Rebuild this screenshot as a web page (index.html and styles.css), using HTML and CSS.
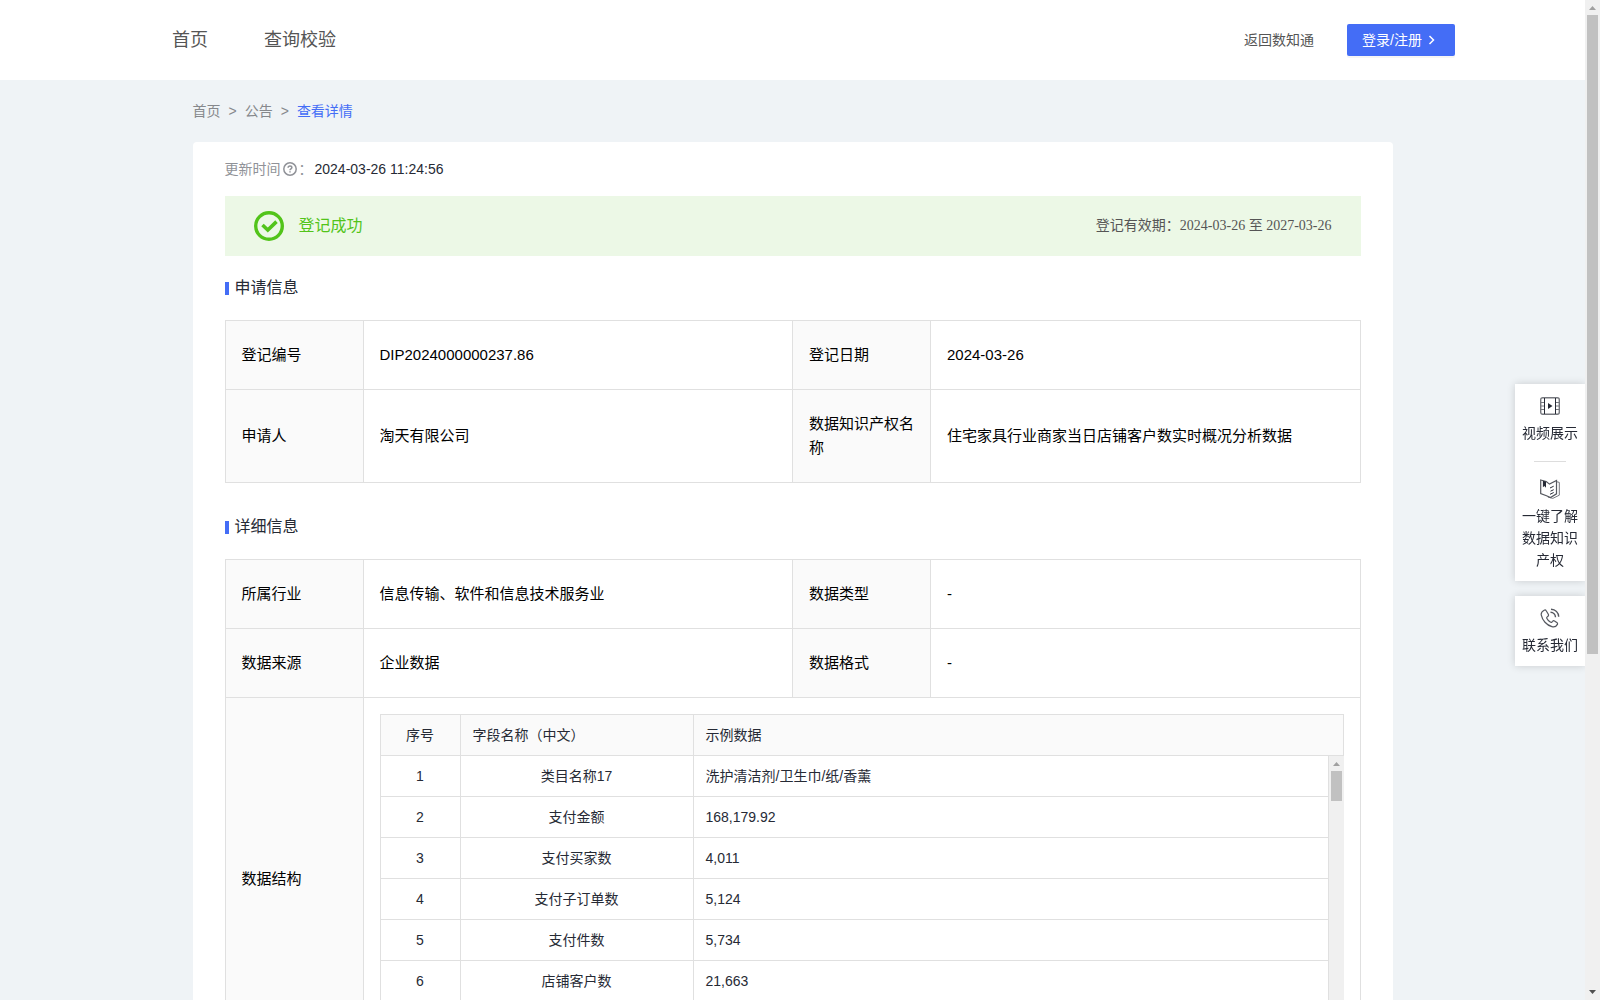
FILE: index.html
```html
<!DOCTYPE html>
<html lang="zh-CN">
<head>
  <meta charset="UTF-8">
  <meta name="viewport" content="width=device-width, initial-scale=1.0">
  <title>查看详情</title>
  <link rel="stylesheet" href="styles.css">
</head>
<body>
  <div class="page">
    <!-- Header -->
    <header class="header">
      <nav class="nav">
        <a href="#home">首页</a>
        <a href="#check">查询校验</a>
      </nav>
      <div class="header-right">
        <a class="back-link" href="#back">返回数知通</a>
        <button class="login-btn" type="button">登录/注册
          <svg width="12" height="12" viewBox="0 0 12 12" fill="none" stroke="currentColor" stroke-width="1.5"><path d="M3.500 2l4 4-4 4"/></svg>
        </button>
      </div>
    </header>

    <main class="container">
      <!-- Breadcrumb -->
      <nav class="breadcrumb">
        <a href="#home">首页</a>
        <span>&gt;</span>
        <a href="#notice">公告</a>
        <span>&gt;</span>
        <a class="current" href="#detail">查看详情</a>
      </nav>

      <div class="card">
        <div class="update-time">
          <span class="update-label">更新时间
            <svg width="14" height="14" viewBox="0 0 14 14" fill="none" stroke="currentColor" stroke-width="1.500"><circle cx="7" cy="7" r="6.200"/><path d="M5.100 5.700c0-1.100.8-1.800 1.900-1.800s1.900.7 1.900 1.700c0 1.300-1.900 1.400-1.900 2.700"/><path d="M7 9.200v1.300"/></svg>：</span>
          <span>2024-03-26 11:24:56</span>
        </div>

        <!-- Status banner -->
        <div class="banner">
          <svg width="30" height="30" viewBox="0 0 30 30" fill="none" stroke="currentColor"><circle cx="15" cy="15" r="13.300" stroke-width="3.400"/><path d="M8.500 14l5.300 5 8.700-8.400" stroke-width="3.600"/></svg>
          <span class="banner-status">登记成功</span>
          <span class="banner-date">登记有效期：2024-03-26 至 2027-03-26</span>
        </div>

        <!-- Application info -->
        <h2 class="section-title">申请信息</h2>
        <table class="info-table">
          <colgroup><col class="col-label"><col><col class="col-label"><col></colgroup>
          <tr>
            <th>登记编号</th><td>DIP2024000000237.86</td>
            <th>登记日期</th><td>2024-03-26</td>
          </tr>
          <tr>
            <th>申请人</th><td>淘天有限公司</td>
            <th>数据知识产权名称</th><td>住宅家具行业商家当日店铺客户数实时概况分析数据</td>
          </tr>
        </table>

        <!-- Detail info -->
        <h2 class="section-title">详细信息</h2>
        <table class="info-table">
          <colgroup><col class="col-label"><col><col class="col-label"><col></colgroup>
          <tr>
            <th>所属行业</th><td>信息传输、软件和信息技术服务业</td>
            <th>数据类型</th><td>-</td>
          </tr>
          <tr>
            <th>数据来源</th><td>企业数据</td>
            <th>数据格式</th><td>-</td>
          </tr>
          <tr>
            <th>数据结构</th>
            <td class="nested" colspan="3">
              <table class="field-table">
                <colgroup><col class="col-index"><col class="col-name"><col></colgroup>
                <tr><th class="center">序号</th><th>字段名称（中文）</th><th>示例数据</th></tr>
              </table>
              <div class="field-scroll">
                <table class="field-table field-body">
                  <colgroup><col class="col-index"><col class="col-name"><col></colgroup>
                  <tr><td>1</td><td>类目名称17</td><td>洗护清洁剂/卫生巾/纸/香薰</td></tr>
                  <tr><td>2</td><td>支付金额</td><td>168,179.92</td></tr>
                  <tr><td>3</td><td>支付买家数</td><td>4,011</td></tr>
                  <tr><td>4</td><td>支付子订单数</td><td>5,124</td></tr>
                  <tr><td>5</td><td>支付件数</td><td>5,734</td></tr>
                  <tr><td>6</td><td>店铺客户数</td><td>21,663</td></tr>
                </table>
                <div class="scrollbar" aria-hidden="true">
                  <svg width="15" height="15" viewBox="0 0 15 15"><path d="M4 10h7L7.500 6z" fill="#a0a0a0"/></svg>
                  <div class="track"><div class="thumb" style="height: 11.6%"></div></div>
                  <svg width="15" height="15" viewBox="0 0 15 15"><path d="M4 5h7L7.500 9z" fill="#505050"/></svg>
                </div>
              </div>
            </td>
          </tr>
        </table>
      </div>
    </main>

    <!-- Floating side bar -->
    <aside class="side-bar">
      <div class="side-box">
        <a href="#video">
          <svg width="20" height="20" viewBox="0 0 20 20" fill="none" stroke="currentColor"><rect x="0.700" y="1.700" width="18.600" height="16.600" rx="2" stroke="#77797f" stroke-width="1.400"/><path d="M1 6.500h4M1 10h4M1 13.500h4M15 6.500h4M15 10h4M15 13.500h4" stroke="#77797f"/><path d="M4.500 2v16M15.500 2v16"/><path d="M8 7l4.500 3L8 13z" fill="currentColor" stroke="none"/></svg>
          视频展示
        </a>
        <hr>
        <a href="#guide">
          <svg width="20" height="20" viewBox="0 0 20 20" fill="none" stroke="currentColor"><path d="M17 2.800l2.300.6v12.800l-6.500 3.200-5-1.400" stroke="#77797f"/><path d="M.7 1l5.500 1.500 3.300 2.600 7-3.600v13.300l-6 3.700-4-1.700-5.800-2.300z" stroke="#55585f" stroke-width="1.200"/><path d="M2.900 1.700v6.500l1.500-1.300L6 8.800V2.500z" fill="currentColor" stroke="none"/><path d="M10 9l3.700-1.800M10.500 12.200l3.200-1.500M10 15.300l3.700-1.800"/></svg>
          一键了解数据知识产权
        </a>
      </div>
      <div class="side-box">
        <a href="#contact">
          <svg width="20" height="20" viewBox="0 0 20 20" fill="none" stroke="#55585f"><path d="M4.200 2.200C2 3.400.8 5 1.300 7.200c1 5 5.300 10 10.600 11.500 2.500.7 4.600-.6 5.500-2.300.4-.9.1-1.400-.6-1.900l-2.300-1.500c-.8-.5-1.400-.3-1.900.3l-.7.8c-.5.5-1 .4-1.600 0-1.500-1-2.700-2.300-3.400-3.700-.3-.6-.2-1.100.3-1.500l.8-.7c.6-.5.7-1.100.3-1.900L6.200 2.800c-.5-.9-1.100-1.100-2-.6z" stroke-width="1.200"/><path d="M10.500 4.300c2.900.1 4.900 2.300 5 5M11 1.200c4.400.3 7.500 3.400 7.700 7.500" stroke-width="1.400"/></svg>
          联系我们
        </a>
      </div>
    </aside>
  </div>

  <!-- Page scroll bar -->
  <div class="scrollbar" aria-hidden="true">
    <svg width="15" height="15" viewBox="0 0 15 15"><path d="M4 10h7L7.500 6z" fill="#a0a0a0"/></svg>
    <div class="track"><div class="thumb" style="height: 65.9%"></div></div>
    <svg width="15" height="15" viewBox="0 0 15 15"><path d="M4 5h7L7.500 9z" fill="#505050"/></svg>
  </div>
</body>
</html>
```
FILE: styles.css
```css
* {
  box-sizing: border-box;
}
body {
  margin: 0;
  height: 100vh;
  display: flex;
  overflow: hidden;
  font-family: "Liberation Sans", "Noto Sans CJK SC", sans-serif;
  font-size: 14px;
  line-height: 22px;
  background-color: #eff3f6;
  color: #262a35;
}
a {
  color: inherit;
  text-decoration: none;
}
svg {
  flex: none;
}
.page {
  flex: 1;
  min-width: 0;
  overflow-y: auto;
}

/* Scroll bars */
.scrollbar {
  flex: none;
  width: 15px;
  display: flex;
  flex-direction: column;
  background-color: #f0f0f0;
}
.track {
  flex: 1;
  padding: 0 2px;
}
.thumb {
  background-color: #c1c1c1;
}

/* Header */
.header {
  height: 80px;
  padding: 0 130px 0 172px;
  display: flex;
  justify-content: space-between;
  align-items: center;
  background-color: #ffffff;
  color: #555555;
}
.nav {
  display: flex;
  gap: 56px;
  font-size: 18px;
}
.header-right {
  display: flex;
  align-items: center;
  gap: 33px;
}
.login-btn {
  height: 32px;
  width: 108px;
  padding: 0 15px;
  display: flex;
  align-items: center;
  gap: 4px;
  white-space: nowrap;
  border: none;
  border-radius: 2px;
  background-color: #446df6;
  box-shadow: 0 2px 0 rgba(0, 0, 0, 0.04);
  color: #ffffff;
  font: inherit;
}

/* Content */
.container {
  max-width: 1200px;
  margin: 0 auto;
}
.breadcrumb {
  height: 62px;
  display: flex;
  align-items: center;
  gap: 8px;
  color: #86888c;
}
.breadcrumb .current {
  color: #446df6;
}
.card {
  padding: 16px 32px 32px;
  border-radius: 4px;
  background-color: #ffffff;
}
.update-time {
  display: flex;
  align-items: center;
  gap: 2px;
}
.update-label {
  display: flex;
  align-items: center;
  gap: 2px;
  color: #909298;
}
.banner {
  height: 60px;
  margin: 16px 0 21px;
  padding: 0 29px;
  display: flex;
  align-items: center;
  gap: 15px;
  background-color: #ecf8e6;
  color: #52c41a;
}
.banner-status {
  font-size: 16px;
}
.banner-date {
  margin-left: auto;
  font-family: "Liberation Serif", "Noto Sans CJK SC", serif;
  color: #555555;
}
.section-title {
  margin: 0 0 21px;
  display: flex;
  align-items: center;
  gap: 6px;
  font-size: 16px;
  font-weight: 400;
  line-height: 22px;
}
.section-title::before {
  content: "";
  width: 4px;
  height: 13px;
  background-color: #446df6;
}

/* Info tables */
table {
  width: 100%;
  border-collapse: collapse;
  table-layout: fixed;
}
th,
td {
  border: 1px solid #e0e0e0;
  font-weight: 400;
  text-align: left;
}
th {
  background-color: #fafafa;
}
.info-table {
  margin-bottom: 33px;
  font-size: 15px;
  line-height: 24px;
  color: #000000;
}
.info-table th,
.info-table td {
  padding: 22px 16px;
}
.col-label {
  width: 138px;
}
.info-table .nested {
  padding: 16px;
}

/* Field list */
.field-table {
  font-size: 14px;
  line-height: 22px;
  color: #262a35;
}
.info-table .field-table th,
.info-table .field-table td {
  height: 41px;
  padding: 0 12px;
}
.col-index {
  width: 80px;
}
.col-name {
  width: 233px;
}
.field-table .center,
.field-body td:nth-child(-n+2) {
  text-align: center;
}
.field-scroll {
  height: 288px;
  display: flex;
  align-items: flex-start;
  overflow: hidden;
}
.field-scroll .scrollbar {
  height: 100%;
}
.info-table .field-body tr:first-child td {
  height: 40px;
  border-top: none;
}

/* Side bar */
.side-bar {
  position: fixed;
  top: 384px;
  right: 15px;
  width: 70px;
  display: flex;
  flex-direction: column;
  gap: 15px;
  clip-path: inset(-10px 0 -10px -10px);
}
.side-box {
  padding: 12px 6px 10px;
  background-color: #ffffff;
  box-shadow: 0 0 8px rgba(0, 0, 0, 0.16);
  text-align: center;
}
.side-box a {
  display: flex;
  flex-direction: column;
  align-items: center;
  gap: 6px;
}
.side-box hr {
  width: 32px;
  margin: 17px auto;
  border: none;
  border-top: 1px solid #dddddd;
}
```
